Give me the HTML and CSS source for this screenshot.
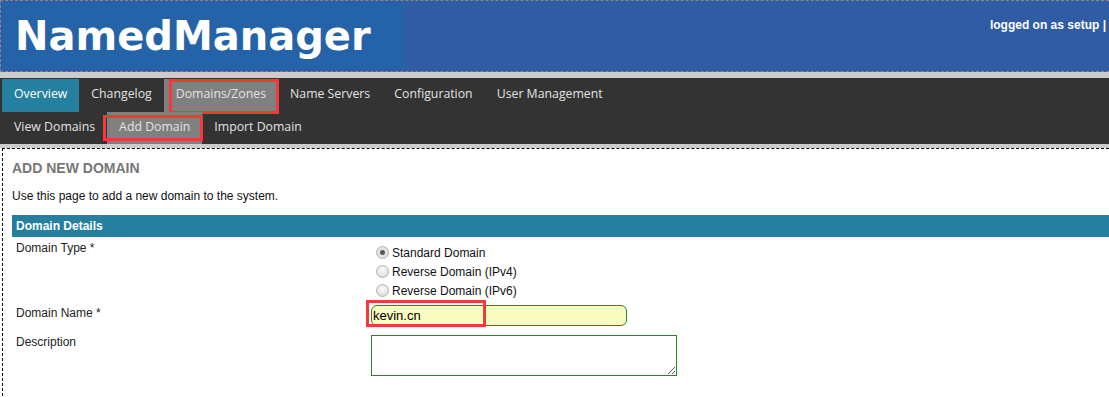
FILE: index.html
```html
<!DOCTYPE html>
<html lang="en">
<head>
    <meta charset="UTF-8">
    <title>NamedManager - Add Domain</title>
    <link rel="stylesheet" href="styles.css">
</head>
<body>

<div class="header">
    <div class="logo">NamedManager</div>
    <div class="login">logged on as setup |</div>
</div>

<div class="menu">
    <ul class="menu-row">
        <li class="tab current">Overview</li>
        <li class="tab">Changelog</li>
        <li class="tab open marked marked-top">Domains/Zones</li>
        <li class="tab">Name Servers</li>
        <li class="tab">Configuration</li>
        <li class="tab">User Management</li>
    </ul>
    <ul class="menu-row">
        <li class="tab">View Domains</li>
        <li class="tab open marked marked-sub">Add Domain</li>
        <li class="tab">Import Domain</li>
    </ul>
</div>

<div class="content">
    <h3>ADD NEW DOMAIN</h3>
    <p class="intro">Use this page to add a new domain to the system.</p>

    <div class="form-table">
        <div class="form-head">Domain Details</div>

        <div class="form-row first">
            <div class="form-label">Domain Type *</div>
            <div class="form-field radios">
                <label><input type="radio" name="domain_type" checked>Standard Domain</label>
                <label><input type="radio" name="domain_type">Reverse Domain (IPv4)</label>
                <label><input type="radio" name="domain_type">Reverse Domain (IPv6)</label>
            </div>
        </div>

        <div class="form-row name-row">
            <div class="form-label">Domain Name *</div>
            <div class="form-field">
                <span class="name-wrap">
                    <input type="text" class="name-input" value="kevin.cn">
                </span>
            </div>
        </div>

        <div class="form-row desc-row">
            <div class="form-label">Description</div>
            <div class="form-field">
                <textarea class="desc-input"></textarea>
            </div>
        </div>
    </div>
</div>

</body>
</html>
```

FILE: styles.css
```css
body {
    margin: 0;
    background: #fff;
    font-family: "Liberation Sans", Arial, sans-serif;
    font-size: 12px;
    overflow: hidden;
}
.header {
    display: flex;
    justify-content: space-between;
    height: 68px;
    padding: 1px;
    background: #305ca5;
    border-top: 1px dashed #888;
    border-bottom: 1px dashed #888;
    border-left: 1px dashed #888;
}
.logo {
    width: 389px;
    padding-left: 13px;
    height: 66px;
    line-height: 66px;
    background: #2563a9;
    color: #fff;
    font-family: "DejaVu Sans", sans-serif;
    font-weight: bold;
    font-size: 40px;
    margin-top: 1px;
}
.login {
    color: #fff;
    font-weight: bold;
    font-size: 12px;
    padding-top: 16px;
    padding-right: 2px;
    white-space: nowrap;
}
.menu {
    background: #333;
    border-top: 6px solid #ccc;
    border-bottom: 4px solid #ccc;
    padding: 1px 0 0 2px;
}
.menu-row {
    display: flex;
    list-style: none;
    margin: 0;
    padding: 0;
}
.tab {
    position: relative;
    padding: 0 12px;
    height: 33px;
    line-height: 30px;
    font-family: "Open Sans", sans-serif;
    font-size: 12.3px;
    color: #e2e2e2;
}
.menu-row + .menu-row .tab {
    height: 32px;
    line-height: 30px;
}
.tab.current {
    background: #25809f;
    color: #fff;
}
.tab.open {
    background: #808080;
}
.marked::after {
    content: "";
    position: absolute;
    border: 3px solid #f23a3a;
}
.marked-top::after {
    left: 5px;
    right: -1px;
    top: 0;
    bottom: -2px;
}
.marked-sub::after {
    left: -4px;
    right: -1px;
    top: 3px;
    bottom: 3px;
}
.content {
    margin-left: 2px;
    border-top: 1px dashed #000;
    border-left: 1px dashed #000;
    padding: 11px 0 40px 9px;
}
.content h3 {
    margin: 0;
    font-size: 14px;
    color: #777;
    line-height: 16px;
}
.intro {
    margin: 13px 0 0;
    color: #111;
    line-height: 14px;
}
.form-table {
    margin-top: 12px;
}
.form-head {
    background: #25809f;
    color: #fff;
    font-weight: bold;
    height: 22px;
    line-height: 22px;
    padding-left: 4px;
}
.form-row {
    display: flex;
    padding-top: 5px;
}
.form-row.first {
    padding-top: 4px;
}
.form-row.name-row {
    padding-top: 5px;
}
.form-label {
    width: 355px;
    padding-left: 4px;
    color: #222;
    line-height: 14px;
    flex-shrink: 0;
}
.name-row .form-label {
    padding-top: 1px;
}
.desc-row .form-label {
    padding-top: 4px;
}
.radios {
    display: flex;
    flex-direction: column;
    padding-top: 2px;
}
.radios label {
    display: flex;
    align-items: center;
    height: 19px;
    color: #111;
}
.radios input {
    appearance: none;
    -webkit-appearance: none;
    box-sizing: border-box;
    width: 13px;
    height: 13px;
    margin: 0 3px 0 5px;
    border: 1px solid #b4b4b4;
    border-radius: 50%;
    background: radial-gradient(circle at 50% 35%, #fafafa 0%, #e6e6e6 55%, #cfcfcf 100%);
}
.radios input:checked {
    background: radial-gradient(circle, #4a4a4a 0%, #6a6a6a 28%, #e8e8e8 40%, #d6d6d6 100%);
}
.name-wrap {
    position: relative;
    display: inline-block;
}
.name-wrap::after {
    content: "";
    position: absolute;
    left: -5px;
    top: -5px;
    width: 114px;
    height: 21px;
    border: 3px solid #f23a3a;
}
.name-input {
    display: block;
    box-sizing: border-box;
    width: 256px;
    height: 21px;
    margin: 0;
    padding: 0 1px;
    background: #fafcc2;
    border: 1px solid #228b22;
    border-radius: 6px;
    font-family: "Liberation Sans", Arial, sans-serif;
    font-size: 13px;
    color: #000;
}
.desc-input {
    display: block;
    box-sizing: border-box;
    width: 306px;
    height: 41px;
    margin: 4px 0 0;
    border: 1px solid #228b22;
    border-radius: 0;
    background: #fff;
}
```
